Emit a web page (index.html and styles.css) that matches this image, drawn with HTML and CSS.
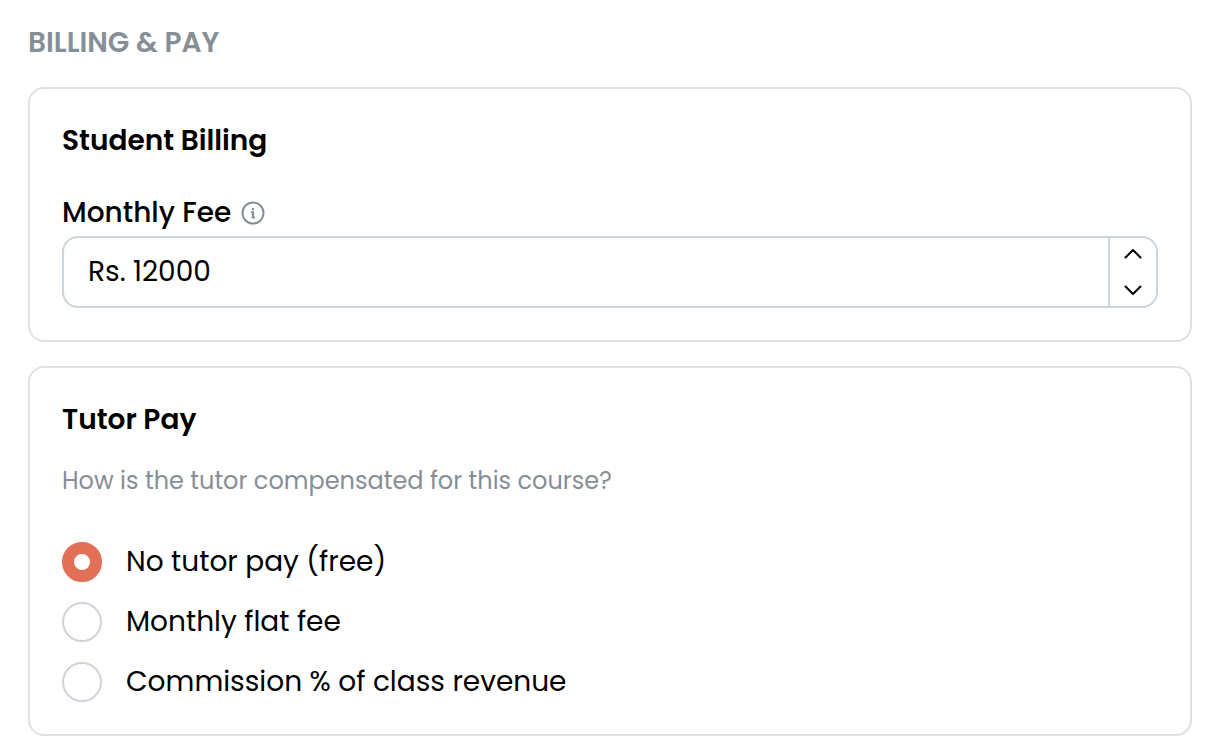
FILE: index.html
```html
<!DOCTYPE html>
<html lang="en">
<head>
    <meta charset="UTF-8" />
    <meta name="viewport" content="width=device-width, initial-scale=1" />
    <title>Billing &amp; Pay</title>
    <link rel="stylesheet" href="styles.css">
</head>
<body>
    <form class="billing">
        <h2 class="section-title">BILLING &amp; PAY</h2>

        <section class="card">
            <h3>Student Billing</h3>
            <div class="label-row">
                <label for="monthlyFee">Monthly Fee</label>
                <svg class="info" viewBox="0 0 24 24" aria-hidden="true">
                    <circle cx="12" cy="12" r="10.5" />
                    <path d="M10 11.2H12V16.2M10.6 16.4H14" />
                    <circle class="dot" cx="12" cy="8" r="1.2" />
                </svg>
            </div>
            <div class="number-input">
                <input type="text" id="monthlyFee" name="monthlyFee" inputmode="numeric" value="Rs. 12000" />
                <div class="controls">
                    <button type="button" aria-label="Increase">
                        <svg viewBox="0 0 20 12"><path d="M2.5 9.5L10 2L17.5 9.5" /></svg>
                    </button>
                    <button type="button" aria-label="Decrease">
                        <svg viewBox="0 0 20 12"><path d="M2.5 2.5L10 10L17.5 2.5" /></svg>
                    </button>
                </div>
            </div>
        </section>

        <section class="card">
            <h3>Tutor Pay</h3>
            <p class="hint">How is the tutor compensated for this course?</p>
            <div class="options">
                <label class="option"><input type="radio" name="tutorPay" value="free" checked /> <span>No tutor pay (free)</span></label>
                <label class="option"><input type="radio" name="tutorPay" value="flat" /> <span>Monthly flat fee</span></label>
                <label class="option"><input type="radio" name="tutorPay" value="commission" /> <span>Commission % of class revenue</span></label>
            </div>
        </section>
    </form>
</body>
</html>
```

FILE: styles.css
```css
* {
    box-sizing: border-box;
}
body {
    margin: 0;
    background: #fff;
    color: #000;
    font-family: Poppins, Inter, "Noto Sans", sans-serif;
    font-size: 28px;
    line-height: 40px;
}
h2, h3, p {
    margin: 0;
}
.billing {
    display: flex;
    flex-direction: column;
    gap: 24px;
    padding: 23px 24px 18px 28px;
}
.section-title {
    color: #868e96;
    font-size: 28px;
    font-weight: 600;
}
.card {
    padding: 32px;
    border: 2px solid #dfe0e6;
    border-radius: 16px;
}
h3 {
    font-size: 28px;
    font-weight: 600;
}
.label-row {
    display: flex;
    align-items: center;
    gap: 10px;
    margin-top: 29px;
    font-weight: 500;
    line-height: 46px;
}
.info {
    width: 24px;
    height: 24px;
    fill: none;
    stroke: #868e96;
    stroke-width: 2;
}
.info .dot {
    fill: #868e96;
    stroke: none;
}
.number-input {
    display: flex;
    height: 72px;
    border: 2px solid #cdd4dc;
    border-radius: 16px;
    overflow: hidden;
}
.number-input input {
    flex: 1;
    min-width: 0;
    padding: 0 24px;
    border: none;
    outline: none;
    background: none;
    color: inherit;
    font: inherit;
}
.controls {
    display: flex;
    flex-direction: column;
    gap: 4px;
    width: 48px;
    border-left: 2px solid #cdd4dc;
}
.controls button {
    display: flex;
    flex: 1;
    align-items: center;
    justify-content: center;
    padding: 0;
    border: none;
    background: none;
    cursor: pointer;
}
.controls svg {
    width: 20px;
    height: 12px;
    fill: none;
    stroke: #000;
    stroke-width: 2;
    stroke-linecap: round;
    stroke-linejoin: round;
}
.hint {
    margin-top: 21px;
    color: #868e96;
    font-size: 24px;
}
.options {
    display: flex;
    flex-direction: column;
    gap: 20px;
    margin-top: 41px;
}
.option {
    display: flex;
    align-items: center;
    gap: 24px;
    cursor: pointer;
}
.option input {
    appearance: none;
    width: 40px;
    height: 40px;
    margin: 0;
    border: 2px solid #cfd4da;
    border-radius: 50%;
    background: #fff;
    cursor: pointer;
}
.option input:checked {
    border: 12px solid #e27056;
}
```
